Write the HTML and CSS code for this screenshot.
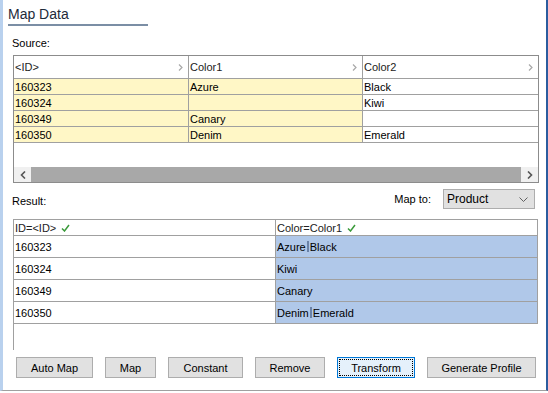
FILE: index.html
```html
<!DOCTYPE html>
<html lang="en">
<head>
    <meta charset="UTF-8">
    <title>Map Data</title>
    <link rel="stylesheet" href="styles.css">
</head>
<body>
    <div class="window">
        <h1 class="title">Map Data</h1>
        <div class="title-rule"></div>

        <div class="label source-label">Source:</div>
        <div class="source-grid">
            <div class="src-row src-head">
                <div class="cell">&lt;ID&gt;<svg class="chev" width="5" height="7" viewBox="0 0 5 7"><polyline points="1,0.5 4,3.5 1,6.5" /></svg></div>
                <div class="cell">Color1<svg class="chev" width="5" height="7" viewBox="0 0 5 7"><polyline points="1,0.5 4,3.5 1,6.5" /></svg></div>
                <div class="cell">Color2<svg class="chev" width="5" height="7" viewBox="0 0 5 7"><polyline points="1,0.5 4,3.5 1,6.5" /></svg></div>
            </div>
            <div class="src-row">
                <div class="cell yellow">160323</div>
                <div class="cell yellow">Azure</div>
                <div class="cell">Black</div>
            </div>
            <div class="src-row">
                <div class="cell yellow">160324</div>
                <div class="cell yellow"></div>
                <div class="cell">Kiwi</div>
            </div>
            <div class="src-row">
                <div class="cell yellow">160349</div>
                <div class="cell yellow">Canary</div>
                <div class="cell"></div>
            </div>
            <div class="src-row">
                <div class="cell yellow">160350</div>
                <div class="cell yellow">Denim</div>
                <div class="cell">Emerald</div>
            </div>
            <div class="src-fill"></div>
            <div class="hscroll">
                <div class="scroll-btn"><svg width="6" height="8" viewBox="0 0 6 8"><polyline points="5,0.5 1.5,4 5,7.5" /></svg></div>
                <div class="scroll-thumb"></div>
                <div class="scroll-btn"><svg width="6" height="8" viewBox="0 0 6 8"><polyline points="1,0.5 4.5,4 1,7.5" /></svg></div>
            </div>
        </div>

        <div class="result-bar">
            <div class="label result-label">Result:</div>
            <div class="map-to">
                <span class="label">Map to:</span>
                <div class="select">
                    <span>Product</span>
                    <svg width="9" height="5" viewBox="0 0 9 5"><polyline points="0.5,0.5 4.5,4.5 8.5,0.5" /></svg>
                </div>
            </div>
        </div>

        <div class="result-grid">
            <div class="res-row res-head">
                <div class="cell">ID=&lt;ID&gt; <svg class="check" width="9" height="8" viewBox="0 0 9 8"><polyline points="1,4.5 3.5,7 8,1" /></svg></div>
                <div class="cell">Color=Color1 <svg class="check" width="9" height="8" viewBox="0 0 9 8"><polyline points="1,4.5 3.5,7 8,1" /></svg></div>
            </div>
            <div class="res-row">
                <div class="cell">160323</div>
                <div class="cell blue">Azure<span class="sep"></span>Black</div>
            </div>
            <div class="res-row">
                <div class="cell">160324</div>
                <div class="cell blue">Kiwi</div>
            </div>
            <div class="res-row">
                <div class="cell">160349</div>
                <div class="cell blue">Canary</div>
            </div>
            <div class="res-row">
                <div class="cell">160350</div>
                <div class="cell blue">Denim<span class="sep"></span>Emerald</div>
            </div>
        </div>

        <div class="buttons">
            <button class="btn btn-auto">Auto Map</button>
            <button class="btn btn-map">Map</button>
            <button class="btn btn-constant">Constant</button>
            <button class="btn btn-remove">Remove</button>
            <button class="btn btn-transform focused">Transform</button>
            <button class="btn btn-profile">Generate Profile</button>
        </div>
    </div>
</body>
</html>
```

FILE: styles.css
```css
body {
    margin: 0;
    padding: 0;
    background-color: #fff;
    font-family: 'Liberation Sans', Arial, sans-serif;
    font-size: 11px;
    color: #000;
}

.window {
    box-sizing: border-box;
    width: 548px;
    height: 391px;
    border-left: 3px solid #b9d1ee;
    border-right: 2px solid #2b5c9e;
    border-bottom: 1px solid #a0a0a0;
    display: flex;
    flex-direction: column;
}

.title {
    margin: 6px 0 0 5px;
    font-size: 14px;
    line-height: 16px;
    font-weight: normal;
    color: #1e2a3a;
}

.title-rule {
    margin: 2px 0 0 5px;
    width: 140px;
    height: 2px;
    background-color: #7b8ea5;
}

.label {
    line-height: 13px;
    color: #000;
}

.source-label {
    margin: 11px 0 0 9px;
}

/* source grid */
.source-grid {
    box-sizing: border-box;
    margin: 5px 0 0 10px;
    width: 526px;
    height: 128px;
    border: 1px solid #8c8c8c;
    display: flex;
    flex-direction: column;
}

.src-row {
    display: grid;
    grid-template-columns: 175px 174px 175px;
    height: 16px;
    border-bottom: 1px solid #a0a0a0;
    box-sizing: border-box;
}

.src-head {
    height: 23px;
}

.cell {
    box-sizing: border-box;
    border-right: 1px solid #a0a0a0;
    padding-left: 1px;
    display: flex;
    align-items: center;
    white-space: nowrap;
    overflow: hidden;
}

.cell:last-child {
    border-right: none;
}

.src-head .cell {
    justify-content: space-between;
    padding-right: 5px;
    color: #222;
}

.chev polyline {
    fill: none;
    stroke: #a8a8a8;
    stroke-width: 1.2;
}

.yellow {
    background-color: #fff7c6;
}

.src-fill {
    flex: 1;
}

.hscroll {
    height: 15px;
    display: flex;
    background-color: #f0f0f0;
}

.scroll-btn {
    width: 17px;
    display: flex;
    align-items: center;
    justify-content: center;
}

.scroll-btn polyline {
    fill: none;
    stroke: #555;
    stroke-width: 1.6;
}

.scroll-thumb {
    flex: 1;
    background-color: #a8a8a8;
}

/* result bar */
.result-bar {
    margin: 6px 0 0 9px;
    height: 20px;
    display: flex;
    justify-content: space-between;
    align-items: center;
}

.result-label {
    margin-top: 4px;
}

.map-to {
    display: flex;
    align-items: center;
    gap: 12px;
    margin-right: 11px;
}

.select {
    box-sizing: border-box;
    width: 92px;
    height: 20px;
    border: 1px solid #adadad;
    background-color: #e1e1e1;
    display: flex;
    align-items: center;
    justify-content: space-between;
    padding: 0 6px 0 3px;
    font-size: 12px;
}

.select polyline {
    fill: none;
    stroke: #606060;
    stroke-width: 1;
}

/* result grid */
.result-grid {
    box-sizing: border-box;
    margin: 10px 0 0 10px;
    width: 525px;
    height: 131px;
    border-left: 1px solid #a0a0a0;
}

.res-row {
    display: grid;
    grid-template-columns: 262px 262px;
    height: 22px;
    border-bottom: 1px solid #a0a0a0;
    box-sizing: border-box;
}

.res-head {
    height: 17px;
    border-top: 1px solid #a0a0a0;
}

.res-row .cell:last-child {
    border-right: 1px solid #a0a0a0;
}

.res-head .cell {
    color: #222;
}

.check {
    margin-left: 5px;
}

.check polyline {
    fill: none;
    stroke: #3a9a3a;
    stroke-width: 1.5;
}

.blue {
    background-color: #b0c8e9;
}

.sep {
    display: inline-block;
    width: 2px;
    height: 11px;
    margin: 0 1px;
    background-color: #6a82a8;
}

/* buttons */
.buttons {
    margin: 7px 0 0 13px;
    display: flex;
    gap: 12px;
}

.btn {
    box-sizing: border-box;
    height: 21px;
    padding: 0;
    border: 1px solid #adadad;
    background-color: #e1e1e1;
    font-family: 'Liberation Sans', Arial, sans-serif;
    font-size: 11px;
    color: #000;
}

.btn-auto { width: 77px; }
.btn-map { width: 51px; }
.btn-constant { width: 75px; }
.btn-remove { width: 70px; }
.btn-transform { width: 78px; }
.btn-profile { width: 109px; }

.focused {
    border-color: #0078d7;
    background-color: #e5f1fb;
    outline: 1px dotted #000;
    outline-offset: -3px;
}
```
